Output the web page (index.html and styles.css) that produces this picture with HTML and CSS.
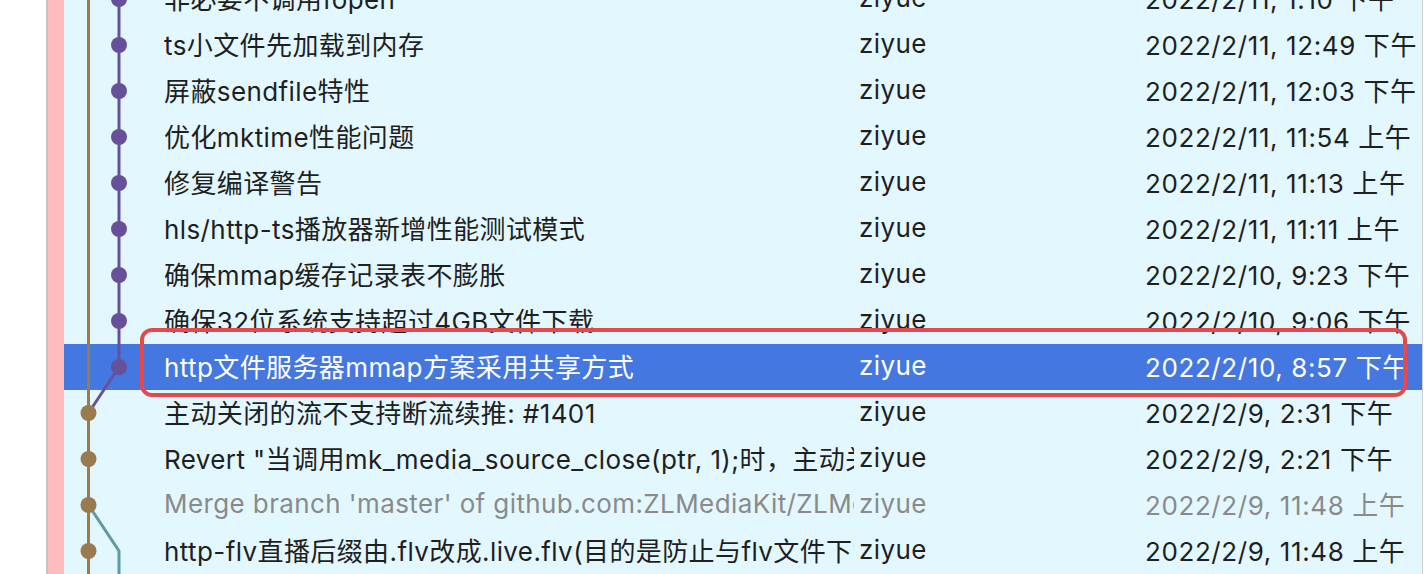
FILE: index.html
```html
<!DOCTYPE html>
<html lang="zh">
<head>
<meta charset="utf-8">
<title>Commit history</title>
<link rel="stylesheet" href="styles.css">
</head>
<body>
<div class="app">
  <div class="gutter"></div>
  <div class="edge"></div>
  <div class="history">
    <div class="rows">
      <svg class="graph" width="100" height="598" viewBox="0 0 100 598" aria-hidden="true">
        <line x1="24.5" y1="0" x2="24.5" y2="598" stroke="#9a7b4f" stroke-width="3"/>
        <line x1="55" y1="0" x2="55" y2="391" stroke="#67509a" stroke-width="3"/>
        <line x1="55" y1="391" x2="24.5" y2="437" stroke="#67509a" stroke-width="3"/>
        <polyline points="24.5,529 55,575 55,598" fill="none" stroke="#5f9aa5" stroke-width="3"/>
        <g fill="#67509a">
          <circle cx="55" cy="23" r="8"/>
          <circle cx="55" cy="69" r="8"/>
          <circle cx="55" cy="115" r="8"/>
          <circle cx="55" cy="161" r="8"/>
          <circle cx="55" cy="207" r="8"/>
          <circle cx="55" cy="253" r="8"/>
          <circle cx="55" cy="299" r="8"/>
          <circle cx="55" cy="345" r="8"/>
          <circle cx="55" cy="391" r="8"/>
        </g>
        <g fill="#9a7b4f">
          <circle cx="24.5" cy="437" r="8"/>
          <circle cx="24.5" cy="483" r="8"/>
          <circle cx="24.5" cy="529" r="8"/>
          <circle cx="24.5" cy="575" r="8"/>
        </g>
      </svg>
      <div class="row"><span class="subject">非必要不调用fopen</span><span class="author">ziyue</span><span class="date">2022/2/11, 1:10 下午</span></div>
      <div class="row"><span class="subject">ts小文件先加载到内存</span><span class="author">ziyue</span><span class="date">2022/2/11, 12:49 下午</span></div>
      <div class="row"><span class="subject">屏蔽sendfile特性</span><span class="author">ziyue</span><span class="date">2022/2/11, 12:03 下午</span></div>
      <div class="row"><span class="subject">优化mktime性能问题</span><span class="author">ziyue</span><span class="date">2022/2/11, 11:54 上午</span></div>
      <div class="row"><span class="subject">修复编译警告</span><span class="author">ziyue</span><span class="date">2022/2/11, 11:13 上午</span></div>
      <div class="row"><span class="subject">hls/http-ts播放器新增性能测试模式</span><span class="author">ziyue</span><span class="date">2022/2/11, 11:11 上午</span></div>
      <div class="row"><span class="subject">确保mmap缓存记录表不膨胀</span><span class="author">ziyue</span><span class="date">2022/2/10, 9:23 下午</span></div>
      <div class="row"><span class="subject">确保32位系统支持超过4GB文件下载</span><span class="author">ziyue</span><span class="date">2022/2/10, 9:06 下午</span></div>
      <div class="row selected"><span class="subject">http文件服务器mmap方案采用共享方式</span><span class="author">ziyue</span><span class="date">2022/2/10, 8:57 下午</span></div>
      <div class="row"><span class="subject">主动关闭的流不支持断流续推: #1401</span><span class="author">ziyue</span><span class="date">2022/2/9, 2:31 下午</span></div>
      <div class="row"><span class="subject">Revert "当调用mk_media_source_close(ptr, 1);时，主动关闭推流"</span><span class="author">ziyue</span><span class="date">2022/2/9, 2:21 下午</span></div>
      <div class="row merge"><span class="subject">Merge branch 'master' of github.com:ZLMediaKit/ZLMediaKit</span><span class="author">ziyue</span><span class="date">2022/2/9, 11:48 上午</span></div>
      <div class="row"><span class="subject">http-flv直播后缀由.flv改成.live.flv(目的是防止与flv文件下载冲突)</span><span class="author">ziyue</span><span class="date">2022/2/9, 11:48 上午</span></div>
    </div>
  </div>
  <div class="right-edge"></div>
  <div class="highlight"></div>
</div>
</body>
</html>
```

FILE: styles.css
```css
html, body {
  margin: 0;
  padding: 0;
  background: #ffffff;
}

.app {
  position: relative;
  display: flex;
  height: 574px;
  overflow: hidden;
  font-family: "Inter", "Noto Sans CJK SC", sans-serif;
  font-size: 26px;
  letter-spacing: 0.4px;
  color: #1f1f1f;
}

.gutter {
  width: 46px;
  flex: none;
  background: #ffffff;
}

.edge {
  width: 16px;
  flex: none;
  background: #ffbcbf;
  border-left: 2px solid #c3c3c3;
}

.history {
  flex: 1;
  background: #e3f8fe;
  overflow: hidden;
}

.right-edge {
  width: 3px;
  flex: none;
  border-left: 1px solid #cfcfcf;
  background: #ffffff;
}

.rows {
  position: relative;
  margin-top: -24px;
}

.graph {
  position: absolute;
  left: 0;
  top: 0;
  z-index: 1;
}

.row {
  display: grid;
  grid-template-columns: 100px 690px 286px 1fr;
  height: 46px;
  box-sizing: border-box;
  padding-bottom: 4px;
  align-items: center;
  white-space: nowrap;
}

.row .subject {
  grid-column: 2;
  overflow: hidden;
}

.row .author {
  grid-column: 3;
  padding-left: 5px;
}

.row .date {
  grid-column: 4;
  padding-left: 5px;
  letter-spacing: 0.6px;
  overflow: hidden;
}

.row.selected {
  background: #4577e0;
  color: #ffffff;
}

.row.merge {
  color: #8a8a8a;
}

.highlight {
  position: absolute;
  left: 140px;
  top: 328px;
  width: 1267px;
  height: 69px;
  box-sizing: border-box;
  border: 4px solid #e6494b;
  border-radius: 12px;
  z-index: 2;
}
```
